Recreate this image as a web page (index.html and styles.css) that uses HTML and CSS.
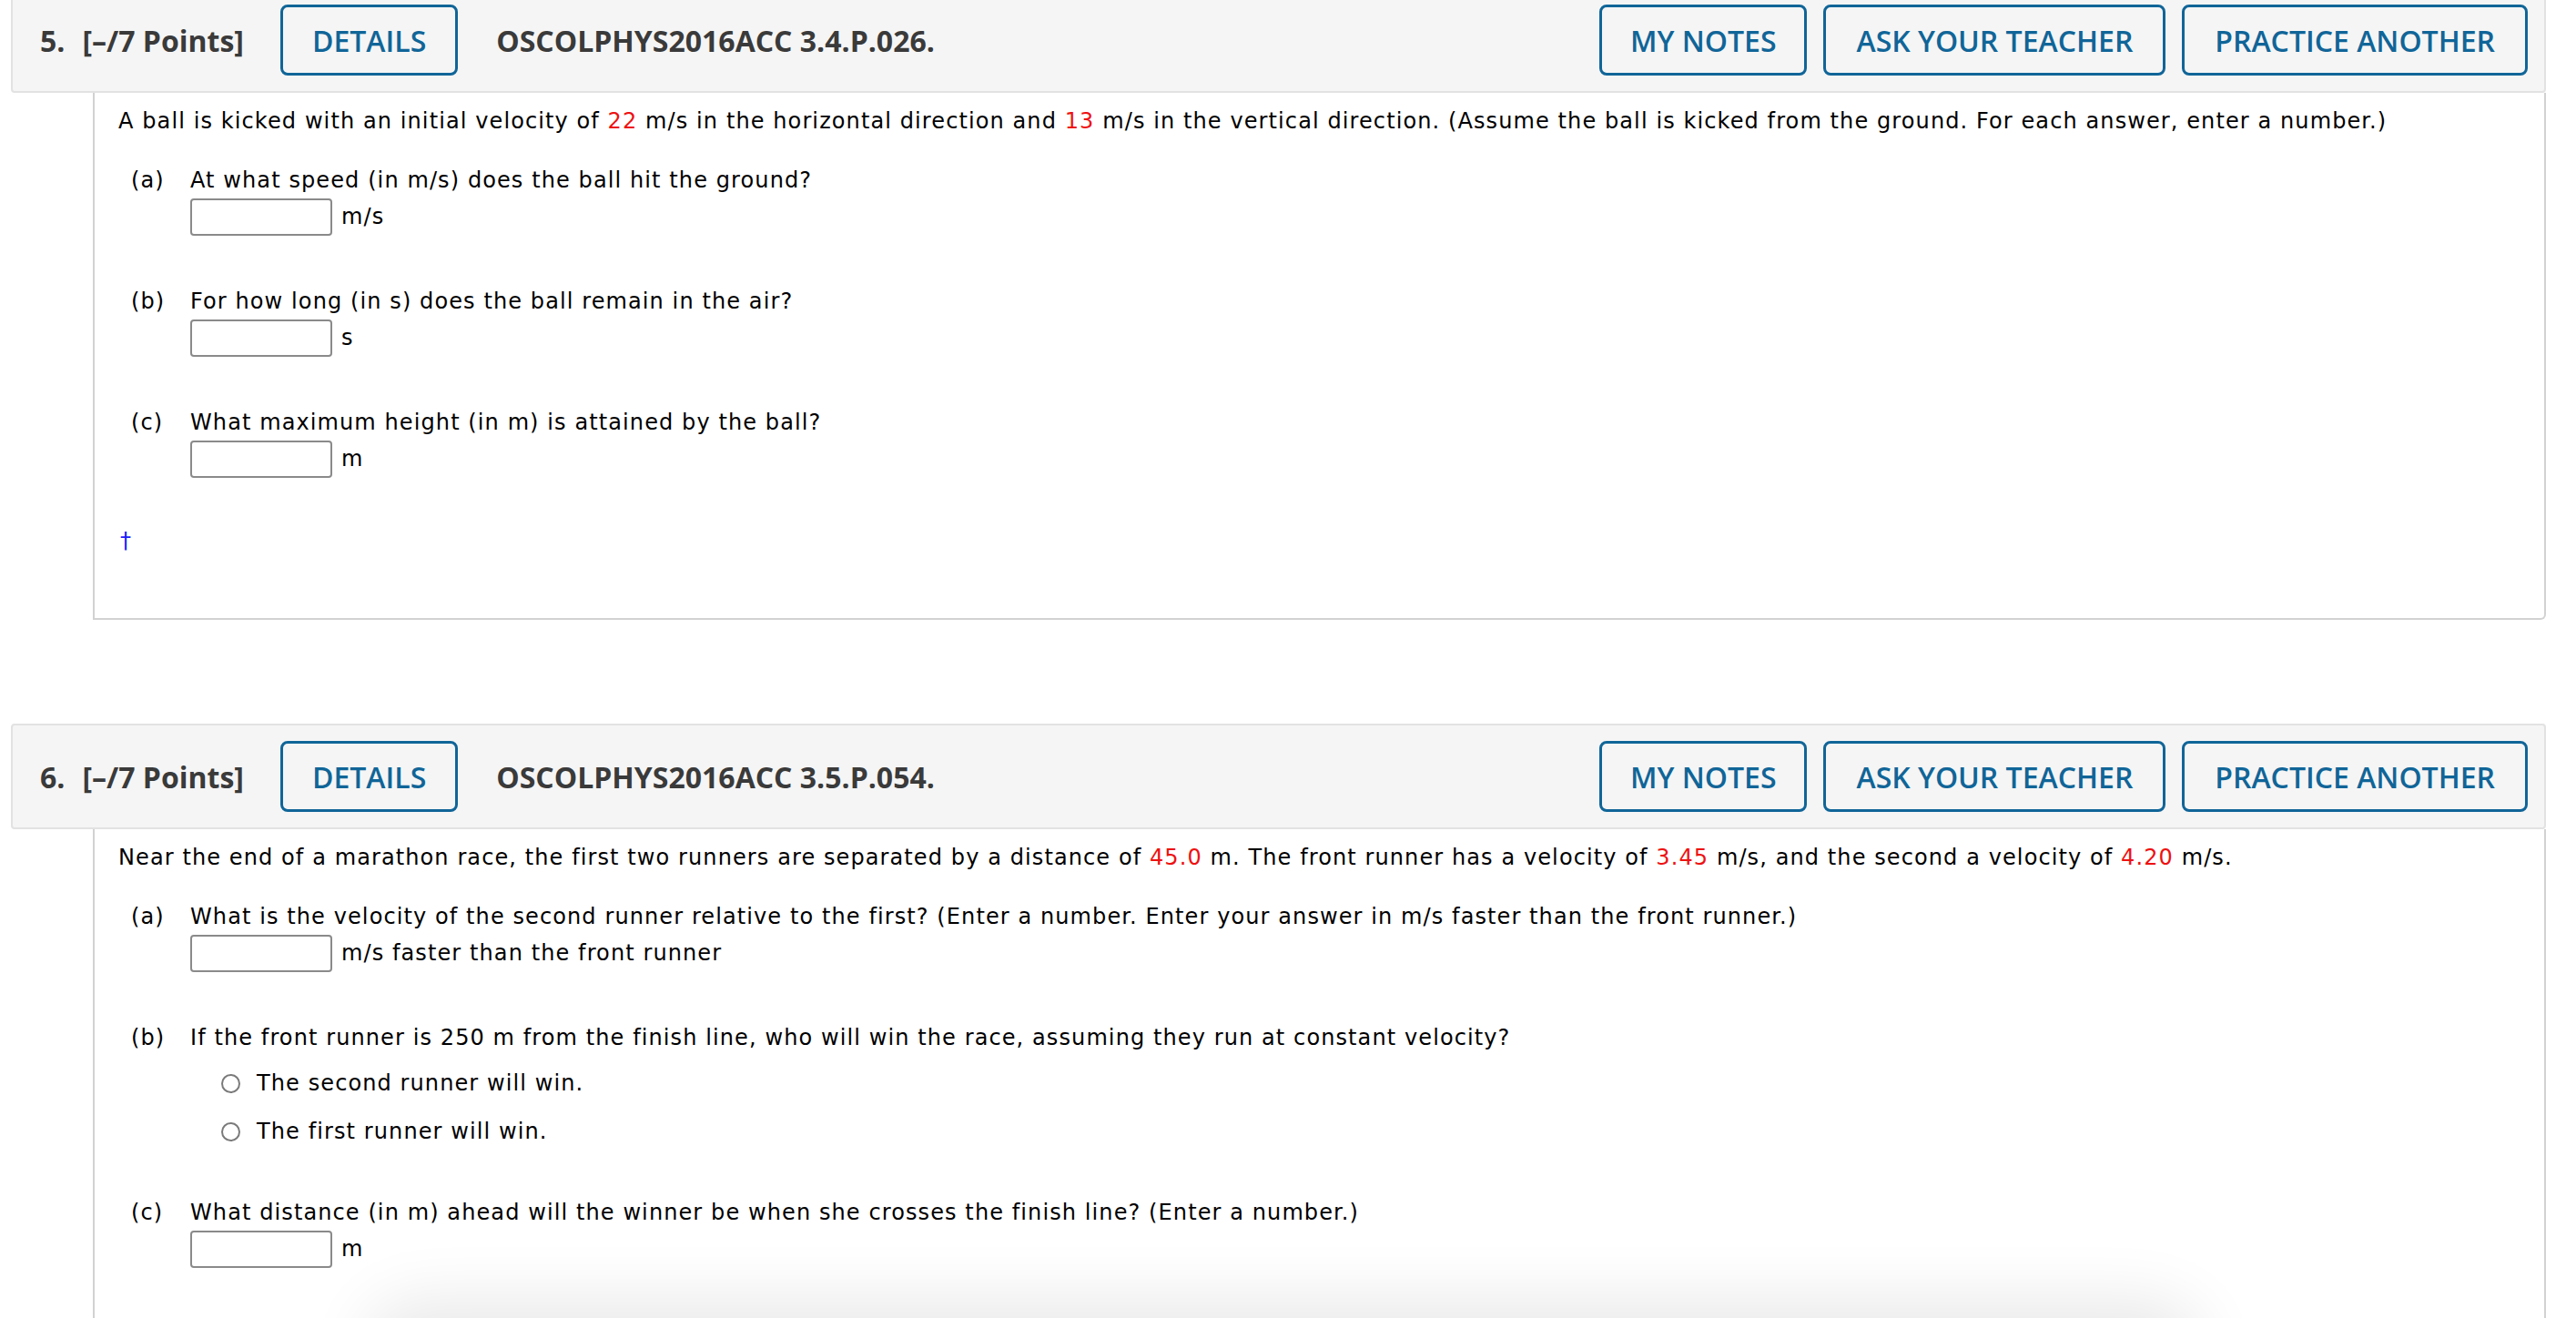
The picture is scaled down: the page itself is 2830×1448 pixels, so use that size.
FILE: index.html
```html
<!DOCTYPE html>
<html lang="en">
<head>
<meta charset="utf-8">
<title>Questions</title>
<link rel="stylesheet" href="styles.css">
</head>
<body>
<div class="page">
  <section class="question">
    <div class="qhead">
      <span class="qnum">5.</span><span class="qpts">[–/7 Points]</span>
      <button class="btn btn-details">DETAILS</button>
      <span class="qcode">OSCOLPHYS2016ACC 3.4.P.026.</span>
      <div class="qactions">
        <button class="btn btn-notes">MY NOTES</button>
        <button class="btn">ASK YOUR TEACHER</button>
        <button class="btn">PRACTICE ANOTHER</button>
      </div>
    </div>
    <div class="qbody">
      <p class="stem">A ball is kicked with an initial velocity of <span class="val">22</span> m/s in the horizontal direction and <span class="val">13</span> m/s in the vertical direction. (Assume the ball is kicked from the ground. For each answer, enter a number.)</p>
      <div class="part">
        <span class="plabel">(a)</span>
        <div class="pcontent">
          <div class="ptext">At what speed (in m/s) does the ball hit the ground?</div>
          <div class="answer"><input class="field" type="text"><span class="unit">m/s</span></div>
        </div>
      </div>
      <div class="part">
        <span class="plabel">(b)</span>
        <div class="pcontent">
          <div class="ptext">For how long (in s) does the ball remain in the air?</div>
          <div class="answer"><input class="field" type="text"><span class="unit">s</span></div>
        </div>
      </div>
      <div class="part">
        <span class="plabel">(c)</span>
        <div class="pcontent">
          <div class="ptext">What maximum height (in m) is attained by the ball?</div>
          <div class="answer"><input class="field" type="text"><span class="unit">m</span></div>
        </div>
      </div>
      <div class="dagger">†</div>
    </div>
  </section>

  <section class="question">
    <div class="qhead">
      <span class="qnum">6.</span><span class="qpts">[–/7 Points]</span>
      <button class="btn btn-details">DETAILS</button>
      <span class="qcode">OSCOLPHYS2016ACC 3.5.P.054.</span>
      <div class="qactions">
        <button class="btn btn-notes">MY NOTES</button>
        <button class="btn">ASK YOUR TEACHER</button>
        <button class="btn">PRACTICE ANOTHER</button>
      </div>
    </div>
    <div class="qbody">
      <p class="stem">Near the end of a marathon race, the first two runners are separated by a distance of <span class="val">45.0</span> m. The front runner has a velocity of <span class="val">3.45</span> m/s, and the second a velocity of <span class="val">4.20</span> m/s.</p>
      <div class="part">
        <span class="plabel">(a)</span>
        <div class="pcontent">
          <div class="ptext">What is the velocity of the second runner relative to the first? (Enter a number. Enter your answer in m/s faster than the front runner.)</div>
          <div class="answer"><input class="field" type="text"><span class="unit">m/s faster than the front runner</span></div>
        </div>
      </div>
      <div class="part">
        <span class="plabel">(b)</span>
        <div class="pcontent">
          <div class="ptext">If the front runner is 250 m from the finish line, who will win the race, assuming they run at constant velocity?</div>
          <div class="choices">
            <label class="choice"><span class="radio"></span>The second runner will win.</label>
            <label class="choice"><span class="radio"></span>The first runner will win.</label>
          </div>
        </div>
      </div>
      <div class="part">
        <span class="plabel">(c)</span>
        <div class="pcontent">
          <div class="ptext">What distance (in m) ahead will the winner be when she crosses the finish line? (Enter a number.)</div>
          <div class="answer"><input class="field" type="text"><span class="unit">m</span></div>
        </div>
      </div>
    </div>
  </section>
</div>
<div class="bottom-shadow"></div>
</body>
</html>
```

FILE: styles.css
```css
html, body {
  margin: 0;
  padding: 0;
  background: #ffffff;
  overflow: hidden;
}

.page {
  margin-top: -14px;
  padding: 0 33px 0 12px;
}

.question + .question {
  margin-top: 114px;
}

.qhead {
  display: flex;
  align-items: center;
  box-sizing: border-box;
  height: 116px;
  padding: 0 18px 0 30px;
  background: #f5f5f5;
  border: 2px solid #e2e2e2;
  border-radius: 4px;
  font-family: "Open Sans", "Liberation Sans", sans-serif;
  color: #3a3a3a;
}

.qnum,
.qpts,
.qcode {
  font-size: 32px;
  font-weight: 700;
  white-space: nowrap;
}

.qpts {
  margin-left: 19px;
}

.btn {
  box-sizing: border-box;
  height: 78px;
  padding: 0 33px;
  border: 3px solid #106598;
  border-radius: 8px;
  background: transparent;
  color: #106598;
  font-family: "Open Sans", "Liberation Sans", sans-serif;
  font-size: 32px;
  font-weight: 600;
  white-space: nowrap;
}

.btn-details {
  margin-left: 40px;
  padding: 0 32px;
}

.btn-notes {
  padding: 0 31px;
}

.qcode {
  margin-left: 42px;
}

.qactions {
  margin-left: auto;
  display: flex;
  gap: 18px;
}

.qbody {
  margin-left: 90px;
  padding: 15px 26px 68px 26px;
  border: 2px solid #d2d2d2;
  border-top: none;
  border-radius: 0 0 6px 0;
  font-family: "DejaVu Sans", Verdana, sans-serif;
  font-size: 24px;
  letter-spacing: 1.1px;
  line-height: 33px;
  color: #000;
}

.stem {
  margin: 0;
}

.val {
  color: #ee1111;
}

.part {
  display: grid;
  grid-template-columns: 65px 1fr;
  padding-left: 14px;
  margin-top: 56px;
}

.stem + .part {
  margin-top: 32px;
}

.answer {
  display: flex;
  align-items: center;
  margin-top: 3px;
}

.field {
  box-sizing: border-box;
  width: 156px;
  height: 41px;
  margin: 0;
  border: 2px solid #8a8a8a;
  border-radius: 4px;
  background: #fff;
}

.unit {
  margin-left: 10px;
}

.choices {
  display: flex;
  flex-direction: column;
  gap: 20px;
  margin-top: 17px;
  padding-left: 34px;
}

.choice {
  display: flex;
  align-items: center;
}

.radio {
  box-sizing: border-box;
  width: 21px;
  height: 21px;
  margin-right: 18px;
  border: 2px solid #7a7a7a;
  border-radius: 50%;
  background: #fff;
}

.dagger {
  margin-top: 53px;
  color: #1a1aff;
  padding-left: 2px;
  font-size: 24px;
}

.bottom-shadow {
  position: fixed;
  left: 420px;
  right: 430px;
  bottom: -80px;
  height: 80px;
  border-radius: 40px;
  box-shadow: 0 0 70px 20px rgba(0, 0, 0, 0.09);
}
```
